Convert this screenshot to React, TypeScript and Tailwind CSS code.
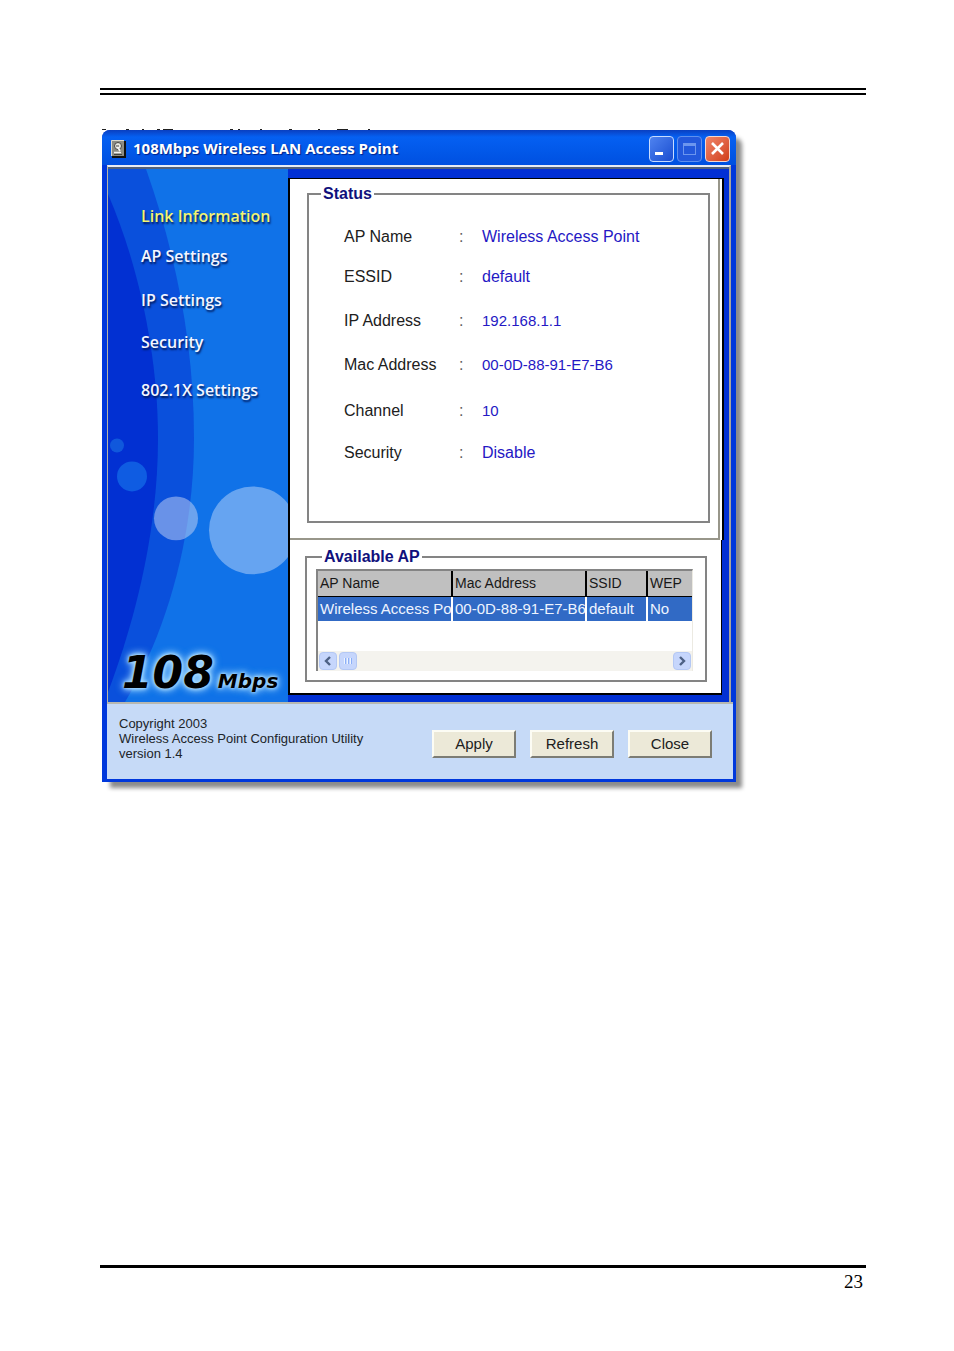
import React from 'react';

const navItems = [
  { label: 'Link Information', spacing: 'mt-0', active: true },
  { label: 'AP Settings', spacing: 'mt-4', active: false },
  { label: 'IP Settings', spacing: 'mt-5', active: false },
  { label: 'Security', spacing: 'mt-[18px]', active: false },
  { label: '802.1X Settings', spacing: 'mt-6', active: false }
];

const statusRows = [
  { label: 'AP Name', value: 'Wireless Access Point', numeric: false, spacing: 'mt-0' },
  { label: 'ESSID', value: 'default', numeric: false, spacing: 'mt-4' },
  { label: 'IP Address', value: '192.168.1.1', numeric: true, spacing: 'mt-5' },
  { label: 'Mac Address', value: '00-0D-88-91-E7-B6', numeric: true, spacing: 'mt-5' },
  { label: 'Channel', value: '10', numeric: true, spacing: 'mt-[22px]' },
  { label: 'Security', value: 'Disable', numeric: false, spacing: 'mt-[18px]' }
];

const accessPoints = [
  { name: 'Wireless Access Point', mac: '00-0D-88-91-E7-B6', ssid: 'default', wep: 'No' }
];

const actions = ['Apply', 'Refresh', 'Close'];

const TitleBar: React.FC = () => (
  <header className="flex h-[35px] items-center rounded-t-lg bg-linear-to-b from-[#0a3fc0] via-[#0560f2] via-20% to-[#0050e0] pl-[9px] pr-[6px] pt-[2px]">
    <svg className="mr-[7px] shrink-0" width="15" height="18" viewBox="0 0 15 18" aria-hidden="true">
      <rect x="1" y="1" width="14" height="17" fill="#111" />
      <rect x="0" y="0" width="13" height="16" fill="#8c8c84" />
      <path d="M0.500 16V0.500H13" stroke="#d8d8d0" fill="none" />
      <circle cx="7" cy="6" r="3.500" fill="#e8e8e0" stroke="#444" />
      <path d="M3 12.500H10M6 6L9 11" stroke="#f4f4f4" strokeWidth="1.600" />
      <path d="M5 6H8M3 14.500H11" stroke="#444" />
    </svg>
    <h1 className="min-w-0 flex-1 truncate font-['Open_Sans','Noto_Sans',sans-serif] text-[15px] font-bold text-white [text-shadow:1px_1px_1px_#00208a]">
      108Mbps Wireless LAN Access Point
    </h1>
    <div className="flex gap-[3px]">
      <button type="button" aria-label="Minimize" className="h-[26px] w-[25px] rounded border border-[#c8dcff] bg-linear-to-br from-[#4f83f0] to-[#1a4cd0]">
        <svg width="23" height="24" viewBox="0 0 23 24" aria-hidden="true">
          <rect x="5" y="15" width="8" height="3" fill="#fff" />
        </svg>
      </button>
      <button type="button" aria-label="Maximize" disabled className="h-[26px] w-[25px] rounded border border-[#5f90ee] bg-[#2358dc]">
        <svg width="23" height="24" viewBox="0 0 23 24" aria-hidden="true">
          <rect x="5.5" y="6.5" width="12" height="11" fill="none" stroke="#6c95ee" />
          <rect x="5" y="6" width="13" height="3" fill="#6c95ee" />
        </svg>
      </button>
      <button type="button" aria-label="Close window" className="h-[26px] w-[25px] rounded border border-[#f4d8d0] bg-linear-to-br from-[#f08468] to-[#d03c14]">
        <svg width="23" height="24" viewBox="0 0 23 24" aria-hidden="true">
          <path d="M6 6L17 17M17 6L6 17" stroke="#fff" strokeWidth="2.600" />
        </svg>
      </button>
    </div>
  </header>
);

const Sidebar: React.FC = () => (
  <nav className="relative flex w-[180px] shrink-0 flex-col overflow-hidden bg-[#1072e8]">
    <svg className="absolute inset-0 h-full w-full" viewBox="0 0 180 534" preserveAspectRatio="none" aria-hidden="true">
      <path d="M0 0H38C66 80 86 170 86 270C86 370 58 465 17 534H0Z" fill="#0a50dc" />
      <path d="M0 25C28 90 50 180 50 270C50 360 28 450 0 524Z" fill="#0230d2" />
      <circle cx="9" cy="277" r="7" fill="#1058dc" />
      <circle cx="24" cy="308" r="15" fill="#0f5ce2" />
      <circle cx="68" cy="350" r="22" fill="#c8d4f4" fillOpacity="0.5" />
      <circle cx="145" cy="362" r="44" fill="#c8dcfa" fillOpacity="0.47" />
    </svg>
    <ul className="relative flex-1 pl-[33px] pt-[35px] font-['Open_Sans','Noto_Sans',sans-serif] text-[16px] font-semibold">
      {navItems.map((item) => (
        <li key={item.label} className={`h-6 leading-6 ${item.spacing}`}>
          <a
            href="#"
            className={`[text-shadow:1px_2px_2px_#001a5c] ${item.active ? 'text-[#f4f470]' : 'text-[#f4f6ff]'}`}
          >
            {item.label}
          </a>
        </li>
      ))}
    </ul>
    <p className="relative flex items-baseline gap-1 whitespace-nowrap pl-[14px] font-['DejaVu_Sans',sans-serif] font-bold italic leading-[42px] text-black [text-shadow:0_0_3px_#b4e0ff,0_0_5px_#a8dcff,0_0_8px_#a8dcff,0_0_10px_#7cc0ff]">
      <span className="text-[44px]">108</span>
      <span className="text-[20px]">Mbps</span>
    </p>
  </nav>
);

const StatusPanel: React.FC = () => (
  <section className="border-x-2 border-t border-black bg-white pr-[2px]">
    <div className="border-b-2 border-r-2 border-[#98968a] pb-[15px] pl-[17px] pr-[8px] pt-[5px]">
      <fieldset className="border-2 border-[#848484]">
        <legend className="ml-[12px] px-[2px] text-[16px] font-bold leading-5 text-[#10107c]">Status</legend>
        <dl className="pb-[56px] pl-[35px] pt-[21px] text-[16px]">
          {statusRows.map((row) => (
            <div key={row.label} className={`flex h-6 leading-6 ${row.spacing}`}>
              <dt className="flex w-[138px] text-[#202020]">
                <span className="w-[115px]">{row.label}</span>
                <span className="text-[#606060]">:</span>
              </dt>
              <dd className={row.numeric ? 'text-[15px] text-[#2418c4]' : 'text-[#2418c4]'}>{row.value}</dd>
            </div>
          ))}
        </dl>
      </fieldset>
    </div>
  </section>
);

const scrollButton =
  'flex h-[18px] w-[18px] items-center justify-center rounded-sm border border-[#b4c8f4] bg-[#c6d6fc]';

const AvailablePanel: React.FC = () => (
  <section className="mr-[2px] border-b-2 border-l-2 border-r border-black bg-white pb-[11px] pl-[15px] pr-[14px] pt-[7px]">
    <fieldset className="min-w-0 border-2 border-[#848484]">
      <legend className="ml-[15px] px-[2px] text-[16px] font-bold leading-5 text-[#10107c]">Available AP</legend>
      <div className="pb-[9px] pl-[9px] pr-[12px] pt-[2px]">
        <div className="border-l-2 border-r border-t-2 border-l-[#848484] border-r-[#eceae2] border-t-[#848484]">
          <table className="w-full table-fixed border-collapse text-left">
            <colgroup>
              <col className="w-[134px]" />
              <col className="w-[134px]" />
              <col className="w-[61px]" />
              <col />
            </colgroup>
            <thead>
              <tr className="h-[25px] bg-[#c0c0c0] text-[14px] text-[#181818]">
                {['AP Name', 'Mac Address', 'SSID', 'WEP'].map((head) => (
                  <th
                    key={head}
                    className="overflow-hidden whitespace-nowrap border-b border-r-2 border-black p-0 pl-[2px] font-normal last:border-r-0"
                  >
                    {head}
                  </th>
                ))}
              </tr>
            </thead>
            <tbody>
              {accessPoints.map((ap) => (
                <tr key={ap.mac} className="h-[25px] bg-[#316ac5] text-[15px] text-[#eef4ff]">
                  {[ap.name, ap.mac, ap.ssid, ap.wep].map((cell) => (
                    <td
                      key={cell}
                      className="overflow-hidden whitespace-nowrap border-r-2 border-white p-0 pl-[2px] last:border-r-0"
                    >
                      {cell}
                    </td>
                  ))}
                </tr>
              ))}
            </tbody>
          </table>
          <div className="mt-[30px] flex h-5 items-center bg-[#f4f3ee] px-px">
            <button type="button" aria-label="Scroll left" className={scrollButton}>
              <svg width="10" height="10" viewBox="0 0 10 10" aria-hidden="true">
                <path d="M7 1L3 5L7 9" fill="none" stroke="#4d6185" strokeWidth="2.4" />
              </svg>
            </button>
            <button type="button" aria-label="Scroll position" className={`ml-[2px] ${scrollButton}`}>
              <svg width="10" height="8" viewBox="0 0 10 8" aria-hidden="true">
                <path d="M1.500 1V7M4.500 1V7M7.500 1V7" stroke="#eef4fe" />
                <path d="M2.500 1V7M5.500 1V7M8.500 1V7" stroke="#8cb0f8" />
              </svg>
            </button>
            <span className="flex-1" />
            <button type="button" aria-label="Scroll right" className={scrollButton}>
              <svg width="10" height="10" viewBox="0 0 10 10" aria-hidden="true">
                <path d="M3 1L7 5L3 9" fill="none" stroke="#4d6185" strokeWidth="2.4" />
              </svg>
            </button>
          </div>
        </div>
      </div>
    </fieldset>
  </section>
);

const UtilityWindow: React.FC = () => (
  <div className="w-full max-w-[634px] rounded-t-lg bg-[#0038dc] shadow-[7px_7px_4px_-1px_#8c8c8c]">
    <TitleBar />
    <div className="mx-[5px] border-l border-r-2 border-t-2 border-l-[#b8b4a4] border-r-[#a8a49c] border-t-[#e8ecf4]">
      <div className="flex border-t-2 border-[#50607c] bg-[#0230d4]">
        <Sidebar />
        <main className="min-w-0 flex-1 pb-[7px] pr-[5px] pt-[9px]">
          <StatusPanel />
          <AvailablePanel />
        </main>
      </div>
    </div>
    <footer className="mr-[3px] ml-[5px] flex items-start justify-between border-t-2 border-[#b8b8b0] bg-[#c6daf7] pb-[18px] pl-[12px] pr-[21px] pt-[12px]">
      <p className="text-[13px] leading-[15px] text-[#202428]">
        Copyright 2003
        <br />
        Wireless Access Point Configuration Utility
        <br />
        version 1.4
      </p>
      <div className="flex gap-[14px] pt-[14px]">
        {actions.map((action) => (
          <button
            key={action}
            type="button"
            className="h-[28px] w-[84px] border-2 border-b-[#7c7c74] border-l-[#fcfcf4] border-r-[#7c7c74] border-t-[#fcfcf4] bg-[#ece9d8] text-[15px] text-[#202020]"
          >
            {action}
          </button>
        ))}
      </div>
    </footer>
    <div className="h-[3px]" />
  </div>
);

const App: React.FC = () => {
  return (
    <div className="flex min-h-screen flex-col bg-white pb-[57px] pl-[100px] pr-[88px] pt-[88px] font-['Liberation_Sans',Arial,sans-serif]">
      <div className="h-[7px] border-b-2 border-t-2 border-black" />
      <div className="pl-[2px] pt-[34px]">
        {/* tops of a hidden line of text, peeking out above the window */}
        <svg className="block" width="272" height="1" aria-hidden="true">
          <path
            d="M0 0.500H4M24 0.500H27M40 0.500H42M55 0.500H58M61 0.500H71M128 0.500H131M136 0.500H138M158 0.500H160M187 0.500H190M216 0.500H218M235 0.500H246M266 0.500H268"
            stroke="#202020"
          />
        </svg>
        <UtilityWindow />
      </div>
      <footer className="mt-auto border-t-[3px] border-black pr-[3px] pt-px text-right font-['Liberation_Serif','Times_New_Roman',serif] text-[19px] leading-[25px] text-black">
        23
      </footer>
    </div>
  );
};

export default App;
